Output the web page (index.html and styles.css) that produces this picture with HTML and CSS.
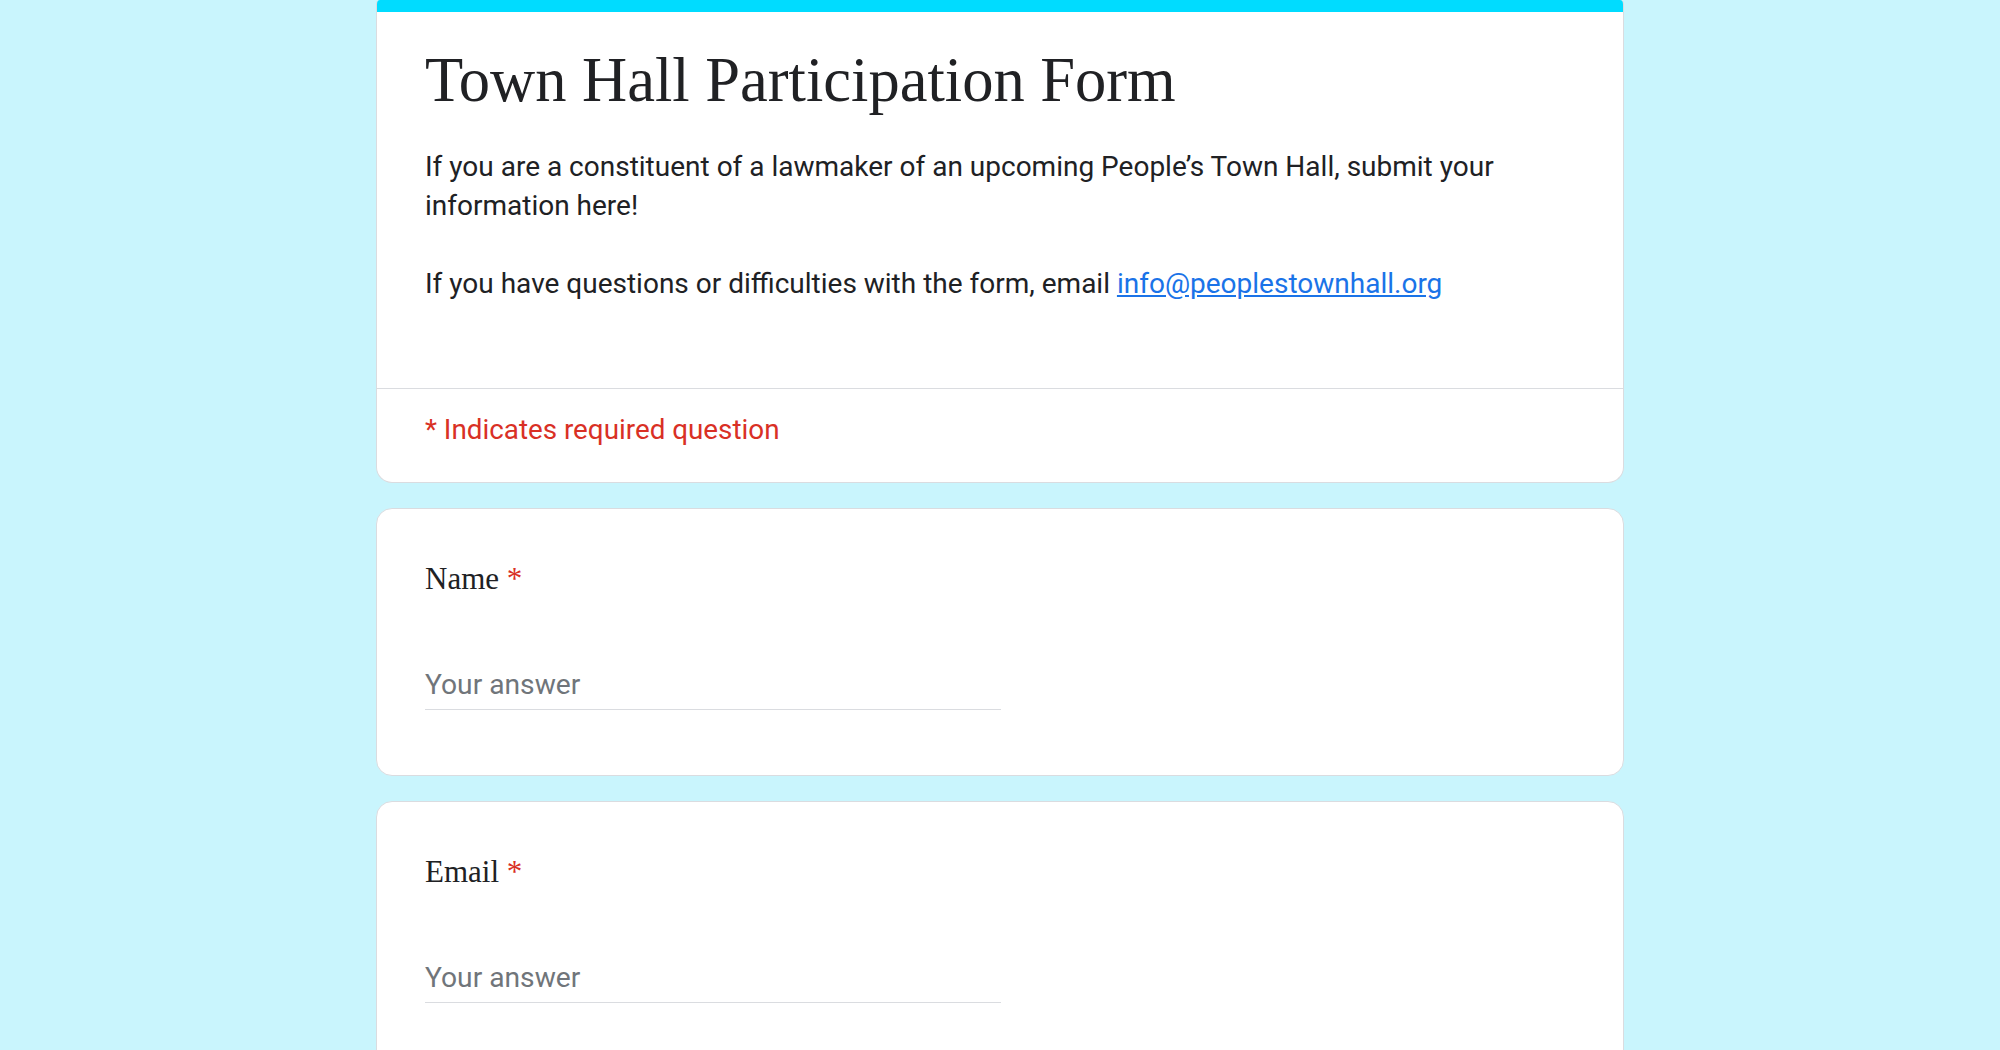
FILE: index.html
```html
<!DOCTYPE html>
<html lang="en">
<head>
<meta charset="utf-8">
<title>Town Hall Participation Form</title>
<link rel="stylesheet" href="styles.css">
</head>
<body>
<main class="form">
  <section class="card header-card">
    <div class="accent"></div>
    <div class="header-body">
      <h1 class="form-title">Town Hall Participation Form</h1>
      <div class="desc">
        <p>If you are a constituent of a lawmaker of an upcoming People’s Town Hall, submit your information here!</p>
        <p class="blank">&nbsp;</p>
        <p>If you have questions or difficulties with the form, email <a href="#" class="link">info@peoplestownhall.org</a></p>
      </div>
    </div>
    <div class="required-note">* Indicates required question</div>
  </section>

  <section class="card question">
    <div class="q-title">Name <span class="star">*</span></div>
    <div class="answer"><span class="placeholder">Your answer</span></div>
  </section>

  <section class="card question">
    <div class="q-title">Email <span class="star">*</span></div>
    <div class="answer"><span class="placeholder">Your answer</span></div>
  </section>
</main>
</body>
</html>
```

FILE: styles.css
```css
html, body {
  margin: 0;
  padding: 0;
}
body {
  background: #c9f5fd;
  font-family: Roboto, "Liberation Sans", Arial, sans-serif;
  color: #202124;
  height: 1050px;
  overflow: hidden;
}
.form {
  width: 1248px;
  margin: 0 auto;
  display: flex;
  flex-direction: column;
  gap: 25px;
}
.card {
  background: #fff;
  border: 1px solid #dadce0;
  border-radius: 16px;
  box-sizing: border-box;
}
.header-card {
  border-top: none;
  border-radius: 4px 4px 16px 16px;
  overflow: hidden;
}
.accent {
  height: 12px;
  background: #00dcff;
  margin: 0 -1px;
}
.header-body {
  padding: 28px 47px 85px 48px;
  border-bottom: 1px solid #dadce0;
}
.form-title {
  margin: 0;
  font-family: "Liberation Serif", "Times New Roman", serif;
  font-weight: 400;
  font-size: 62.5px;
  line-height: 80px;
  color: #202124;
}
.desc {
  margin-top: 27px;
  font-size: 28px;
  line-height: 39px;
  color: #202124;
}
.desc p {
  margin: 0;
}
.link {
  color: #1a73e8;
  text-decoration: underline;
}
.required-note {
  padding: 26px 48px 37px;
  font-size: 27.8px;
  line-height: 30px;
  color: #d93025;
}
.question {
  padding: 46px 48px 65px;
}
.q-title {
  font-family: "Liberation Serif", "Times New Roman", serif;
  font-size: 31px;
  line-height: 48px;
  color: #202124;
}
.star {
  color: #d93025;
}
.answer {
  width: 576px;
  margin-top: 62px;
  padding-bottom: 4px;
  border-bottom: 1px solid #dadce0;
  font-size: 28.2px;
  line-height: 40px;
}
.placeholder {
  color: #70757a;
}
```
